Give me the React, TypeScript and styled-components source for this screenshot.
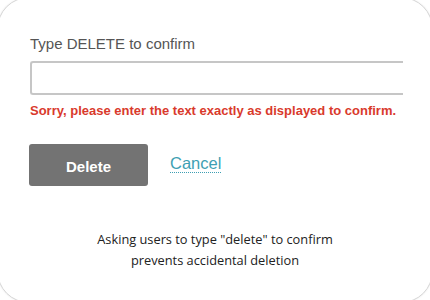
import React from 'react';
import styled, { createGlobalStyle } from 'styled-components';

const GlobalStyle = createGlobalStyle`
  html, body {
    margin: 0;
    padding: 0;
    background: #ffffff;
    overflow: hidden;
  }
`;

const Card = styled.div`
  box-sizing: border-box;
  width: 436px;
  height: 306px;
  margin: -3px;
  padding: 37px 0 0 32px;
  border: 1px solid #d6d6d6;
  border-radius: 32px;
  box-shadow: 0 0 2px rgba(0, 0, 0, 0.08);
  background: #ffffff;
  overflow: hidden;
  display: flex;
  flex-direction: column;
`;

const Label = styled.label`
  font-family: 'Liberation Sans', Arial, sans-serif;
  font-size: 15px;
  line-height: 17px;
  color: #555555;
`;

const Input = styled.input`
  box-sizing: border-box;
  width: 373px;
  height: 34px;
  margin-top: 9px;
  border: 2px solid #c6c6c6;
  border-right: none;
  border-radius: 3px 0 0 3px;
  outline: none;
  background: #ffffff;
  padding: 0 8px;
  font-family: 'Liberation Sans', Arial, sans-serif;
  font-size: 14px;
`;

const ErrorText = styled.p`
  margin: 8px 0 0;
  font-family: 'Liberation Sans', Arial, sans-serif;
  font-size: 13px;
  font-weight: bold;
  line-height: 15px;
  color: #d93a2c;
`;

const Actions = styled.div`
  display: flex;
  align-items: center;
  gap: 22px;
  margin-top: 26px;
`;

const DeleteButton = styled.button`
  width: 119px;
  height: 42px;
  margin-left: -1px;
  border: none;
  border-radius: 3px;
  background: #737373;
  color: #ffffff;
  font-family: 'Liberation Sans', Arial, sans-serif;
  font-size: 15px;
  font-weight: bold;
  cursor: pointer;
  padding: 2px 0 0;
`;

const CancelLink = styled.a`
  font-family: 'Liberation Sans', Arial, sans-serif;
  font-size: 16.5px;
  line-height: 18px;
  color: #3e9fb3;
  text-decoration: none;
  border-bottom: 1px dotted #3e9fb3;
  margin-top: -3px;
  cursor: pointer;
`;

const Caption = styled.p`
  margin: 43px 0 0 -32px;
  text-align: center;
  font-family: 'Open Sans', sans-serif;
  font-size: 12.8px;
  line-height: 20.5px;
  color: #222222;
`;

export default function App() {
  return (
    <>
      <GlobalStyle />
      <Card>
        <Label htmlFor="confirm">Type DELETE to confirm</Label>
        <Input id="confirm" type="text" />
        <ErrorText>Sorry, please enter the text exactly as displayed to confirm.</ErrorText>
        <Actions>
          <DeleteButton>Delete</DeleteButton>
          <CancelLink>Cancel</CancelLink>
        </Actions>
        <Caption>
          Asking users to type "delete" to confirm
          <br />
          prevents accidental deletion
        </Caption>
      </Card>
    </>
  );
}
